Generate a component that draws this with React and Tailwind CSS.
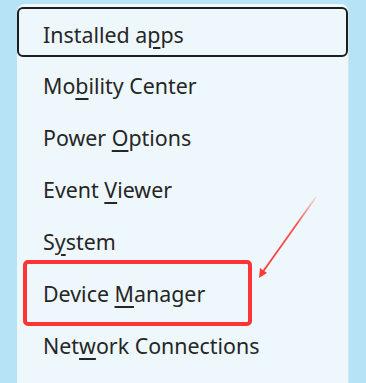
import React from "react";

const items = [
  ["Installed a", "p", "ps"],
  ["Mo", "b", "ility Center"],
  ["Power ", "O", "ptions"],
  ["Event ", "V", "iewer"],
  ["S", "y", "stem"],
  ["Device ", "M", "anager"],
  ["Net", "w", "ork Connections"],
];

function Label({ parts }) {
  return (
    <span className="whitespace-nowrap">
      {parts[0]}
      <span className="underline decoration-[1.5px] underline-offset-[4px]">{parts[1]}</span>
      {parts[2]}
    </span>
  );
}

export default function App() {
  return (
    <div className="relative w-[366px] h-[383px] overflow-hidden bg-[#b6e4f6] pt-[4px] pl-[17px]" style={{ fontFamily: '"Noto Sans", "Open Sans", sans-serif' }}>
      <div className="w-[332px] h-[400px] bg-[#eef8fc] rounded-t-[8px] border-r border-[#d6e6ec] pt-[3px] text-[21.4px] text-[#262626]">
        <div className="h-[50px] border-2 border-[#1e1e1e] rounded-[6px] flex items-center pl-[24px] pt-[5px] leading-none">
          <Label parts={items[0]} />
        </div>
        {items.slice(1).map((p, i) => (
          <div key={i} className="h-[52px] flex items-center pl-[26px] pt-[5px] leading-none">
            <Label parts={p} />
          </div>
        ))}
      </div>
      <div className="absolute left-[23px] top-[260px] w-[229px] h-[66px] border-[4px] border-[#ff3434] rounded-[5px]" />
      <svg className="absolute left-0 top-0" width="366" height="383" viewBox="0 0 366 383">
        <defs>
          <linearGradient id="g" x1="315" y1="198" x2="262" y2="273" gradientUnits="userSpaceOnUse">
            <stop offset="0" stopColor="#ff3a3a" stopOpacity="0.15" />
            <stop offset="0.35" stopColor="#ff3a3a" stopOpacity="0.9" />
            <stop offset="1" stopColor="#ff3a3a" stopOpacity="1" />
          </linearGradient>
        </defs>
        <line x1="316" y1="197" x2="262" y2="273" stroke="url(#g)" strokeWidth="1.8" />
        <polygon points="259,278 260,268 267,273" fill="#ff3a3a" />
      </svg>
    </div>
  );
}
